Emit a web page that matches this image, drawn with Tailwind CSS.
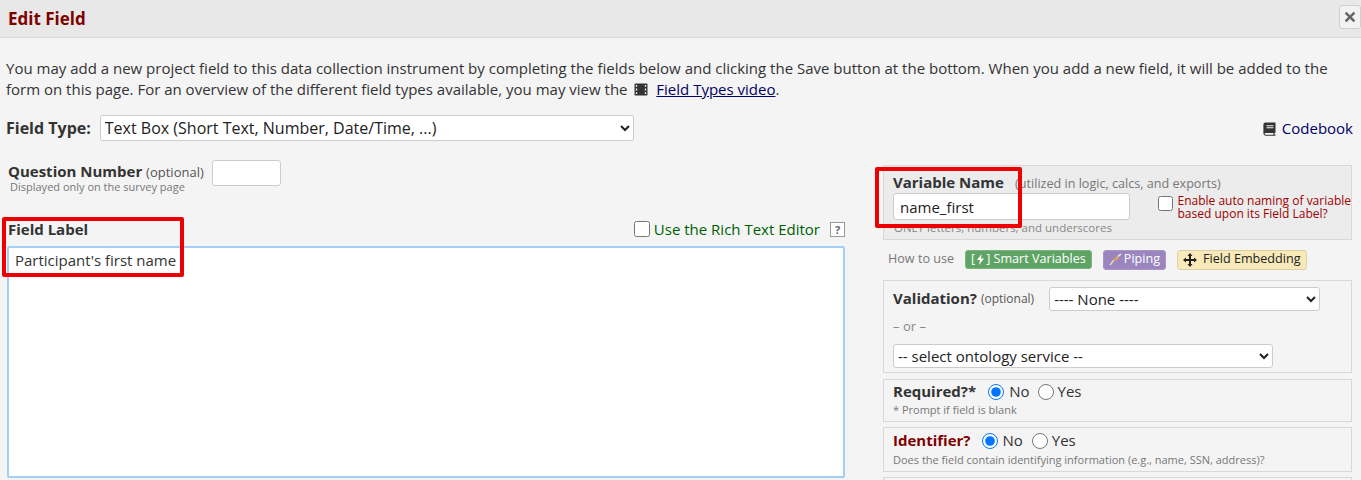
<!DOCTYPE html>
<html lang="en">

<head>
    <meta charset="UTF-8" />
    <title>Edit Field</title>
    <script src="https://cdn.jsdelivr.net/npm/@tailwindcss/browser@4"></script>
</head>

<body class="bg-[#f4f4f4] font-['Open_Sans',sans-serif] text-[#333] overflow-hidden h-[480px] relative">
    <!-- dialog title -->
    <div class="h-[38px] bg-[#e8e8e8] border-b border-[#dcdcdc] flex items-center justify-between pl-[8px] pr-0">
        <h1 class="text-[17px] font-bold text-[#800000]">Edit Field</h1>
        <button class="w-[22px] h-[24px] mt-[-4px] bg-[#f2f2f2] border border-[#cfcfcf] rounded-[3px] text-[#666] flex items-center justify-center">
            <svg width="12" height="12" viewBox="0 0 12 12"><path d="M2.5 0.8 6 4.2 9.5 0.8 11.3 2.6 7.8 6 11.3 9.4 9.5 11.2 6 7.8 2.5 11.2 0.7 9.4 4.2 6 0.7 2.6z" fill="#666" /></svg>
        </button>
    </div>

    <div class="px-[6px]">
        <p class="mt-[20px] text-[15px] leading-[21px] text-[#333] w-[1340px]">
            You may add a new project field to this data collection instrument by completing the fields below and clicking the Save button at the bottom. When you add a new field, it will be added to the form on this page. For an overview of the different field types available, you may view the
            <svg class="inline mx-[3px] mt-[-3px]" width="14" height="13" viewBox="0 0 14 13"><path fill-rule="evenodd" d="M1.5 0.5h11a1 1 0 0 1 1 1v10a1 1 0 0 1-1 1h-11a1 1 0 0 1-1-1v-10a1 1 0 0 1 1-1zM1.8 2v1.8h1.4V2zM1.8 5.600v1.800h1.400V5.600zM1.800 9.200V11h1.400V9.200zM10.800 2v1.800h1.400V2zM10.800 5.600v1.800h1.400V5.600zM10.800 9.200V11h1.400V9.200z" fill="#333" /></svg>
            <a class="text-[#000066] underline ml-[1px]">Field Types video</a>.
        </p>

        <div class="mt-[15px] flex items-center justify-between h-[26px]">
            <div class="flex items-center">
                <label class="text-[16px] font-bold mr-[9px] whitespace-nowrap">Field Type:</label>
                <select class="w-[534px] h-[26px] bg-white border border-[#ccc] rounded-[3px] text-[16px] text-[#222]">
                    <option>Text Box (Short Text, Number, Date/Time, ...)</option>
                </select>
            </div>
            <a class="flex items-center gap-[6px] text-[15px] text-[#000066] pr-[2px] mt-[1px]">
                <svg width="13" height="14" viewBox="0 0 13 14"><path fill-rule="evenodd" d="M2.5 0.5H12.5V10.5L11.6 11v1.6l0.9 0.4v0.8H2.5A2.2 2.2 0 0 1 0.4 11.6V2.6A2.1 2.1 0 0 1 2.5 0.5zM3.5 3.2v1h7v-1zM3.5 5.3v1h7v-1zM2.6 11a0.9 0.9 0 0 0 0 1.800h7.800V11z" fill="#333" /></svg>
                Codebook
            </a>
        </div>

        <div class="flex mt-[19px]">
            <!-- left column -->
            <div class="w-[838px] shrink-0 ml-[1px]">
                <div class="flex items-start h-[55px] pl-[1px]">
                    <div class="pt-[2px]">
                        <div class="text-[15px] leading-[18px] whitespace-nowrap"><b>Question Number</b> <span class="text-[13px] text-[#555]">(optional)</span></div>
                        <div class="text-[11px] leading-[11px] text-[#777] ml-[2px]">Displayed only on the survey page</div>
                    </div>
                    <input class="ml-[8px] w-[69px] h-[26px] bg-white border border-[#ccc] rounded-[3px]" />
                </div>
                <div class="flex items-center justify-between h-[26px] mt-[1px]">
                    <label class="text-[15px] font-bold pl-[1px]">Field Label</label>
                    <div class="flex items-center">
                        <input type="checkbox" class="w-[16px] h-[16px] mr-[4px]" />
                        <span class="text-[15px] text-[#006000]">Use the Rich Text Editor</span>
                        <span class="ml-[10px] w-[15px] h-[15px] border border-[#999] bg-white text-[#666] text-[11px] font-bold flex items-center justify-center leading-none">?</span>
                    </div>
                </div>
                <textarea class="block mt-[4px] w-[838px] h-[232px] bg-white border-2 border-[#a6cdf2] rounded-[2px] text-[15px] leading-[20px] pl-[6px] pt-[2px] outline-none resize-none">Participant's first name</textarea>
            </div>

            <!-- right column -->
            <div class="w-[469px] ml-[38px] mt-[5px] shrink-0">
                <div class="h-[75px] bg-[#ececec] border border-[#d8d8d8] pl-[9px] pt-[7px] flex flex-col relative">
                    <div class="leading-[19px] whitespace-nowrap"><b class="text-[15px]">Variable Name</b> <span class="ml-[7px] text-[12.6px] text-[#777]">(utilized in logic, calcs, and exports)</span></div>
                    <div class="flex">
                        <input value="name_first" class="w-[239px] h-[27px] bg-white border border-[#ccc] rounded-[3px] text-[15px] px-[6px] text-[#222]" />
                        <input type="checkbox" class="ml-[28px] mt-[3px] w-[15px] h-[15px]" />
                        <div class="ml-[5px] text-[12px] leading-[13px] text-[#a00000] mt-[1px] whitespace-nowrap">Enable auto naming of variable<br />based upon its Field Label?</div>
                    </div>
                    <div class="text-[11.5px] leading-[14px] text-[#888] mt-[1px] ml-[1px]">ONLY letters, numbers, and underscores</div>
                </div>

                <div class="flex items-center h-[35px] mt-[2px] pl-[5px] text-[12.6px] whitespace-nowrap">
                    <span class="text-[#777] mr-[11px]">How to use</span>
                    <span class="h-[19px] px-[5px] bg-[#60a465] border border-[#7cb47f] rounded-[3px] text-white flex items-center gap-[1px] mr-[11px]">[<svg width="9" height="11" viewBox="0 0 9 11"><path d="M5.5 0 1 6h3L3 11l5-6.500H5z" fill="#fff" /></svg>] Smart Variables</span>
                    <span class="h-[20px] px-[5px] bg-[#9a85bf] border border-[#a796c6] rounded-[3px] text-white flex items-center gap-[2px] mr-[11px]"><svg width="13" height="13" viewBox="0 0 13 13"><path d="M1 12 5 7" stroke="#e8d9b0" stroke-width="1.500" /><path d="M5 6 8 3l2 2-3 3z" fill="#e9a54c" /><path d="M9 3.500 12 1" stroke="#eee" stroke-width="1.500" /></svg>Piping</span>
                    <span class="h-[20px] px-[5px] bg-[#f7e9b8] border border-[#ddd0a2] rounded-[3px] text-[#222] flex items-center gap-[6px]"><svg width="14" height="14" viewBox="0 0 14 14"><path d="M7 0 9.500 3H8v3h3V4.500L14 7l-3 2.500V8H8v3h1.500L7 14l-2.500-3H6V8H3v1.500L0 7l3-2.500V6h3V3H4.500z" fill="#222" /></svg>Field Embedding</span>
                </div>

                <div class="h-[93px] mt-[3px] border border-[#d8d8d8] pl-[9px] relative">
                    <div class="flex items-center h-[35px]">
                        <b class="text-[15px]">Validation?</b>
                        <span class="ml-[4px] text-[12px] text-[#555]">(optional)</span>
                        <select class="ml-[15px] w-[271px] h-[24px] bg-white border border-[#ccc] rounded-[3px] text-[15px] text-[#222]"><option>---- None ----</option></select>
                    </div>
                    <div class="text-[13px] leading-[18px] text-[#888] mt-[1px]">– or –</div>
                    <select class="mt-[9px] block w-[380px] h-[24px] bg-white border border-[#ccc] rounded-[3px] text-[15px] text-[#222]"><option>-- select ontology service --</option></select>
                </div>

                <div class="h-[43px] mt-[6px] border border-[#d8d8d8] pl-[9px]">
                    <div class="flex items-center h-[25px] mt-[-1px]">
                        <b class="text-[15px] mr-[12px]">Required?*</b>
                        <input type="radio" name="req" checked class="w-[16px] h-[16px] m-0" />
                        <span class="text-[15px] ml-[5px] mr-[8px]">No</span>
                        <input type="radio" name="req" class="w-[16px] h-[16px] m-0" />
                        <span class="text-[15px] ml-[4px]">Yes</span>
                    </div>
                    <div class="text-[11px] leading-[12px] text-[#777]">* Prompt if field is blank</div>
                </div>

                <div class="h-[45px] mt-[5px] border border-[#d8d8d8] pl-[9px]">
                    <div class="flex items-center h-[25px]">
                        <b class="text-[15px] text-[#800000] mr-[12px]">Identifier?</b>
                        <input type="radio" name="ident" checked class="w-[16px] h-[16px] m-0" />
                        <span class="text-[15px] ml-[4px] mr-[9px]">No</span>
                        <input type="radio" name="ident" class="w-[16px] h-[16px] m-0" />
                        <span class="text-[15px] ml-[4px]">Yes</span>
                    </div>
                    <div class="text-[11px] leading-[12px] text-[#777] mt-[1px] whitespace-nowrap">Does the field contain identifying information (e.g., name, SSN, address)?</div>
                </div>

                <div class="h-[30px] mt-[5px] border border-[#d8d8d8]"></div>
            </div>
        </div>
    </div>

    <!-- red annotation boxes drawn over the screenshot -->
    <div class="absolute left-[2px] top-[217px] w-[182px] h-[60px] border-[4px] border-[#ee0000] rounded-[2px]"></div>
    <div class="absolute left-[875px] top-[167px] w-[147px] h-[61px] border-[4px] border-[#ee0000] rounded-[2px]"></div>
</body>

</html>
